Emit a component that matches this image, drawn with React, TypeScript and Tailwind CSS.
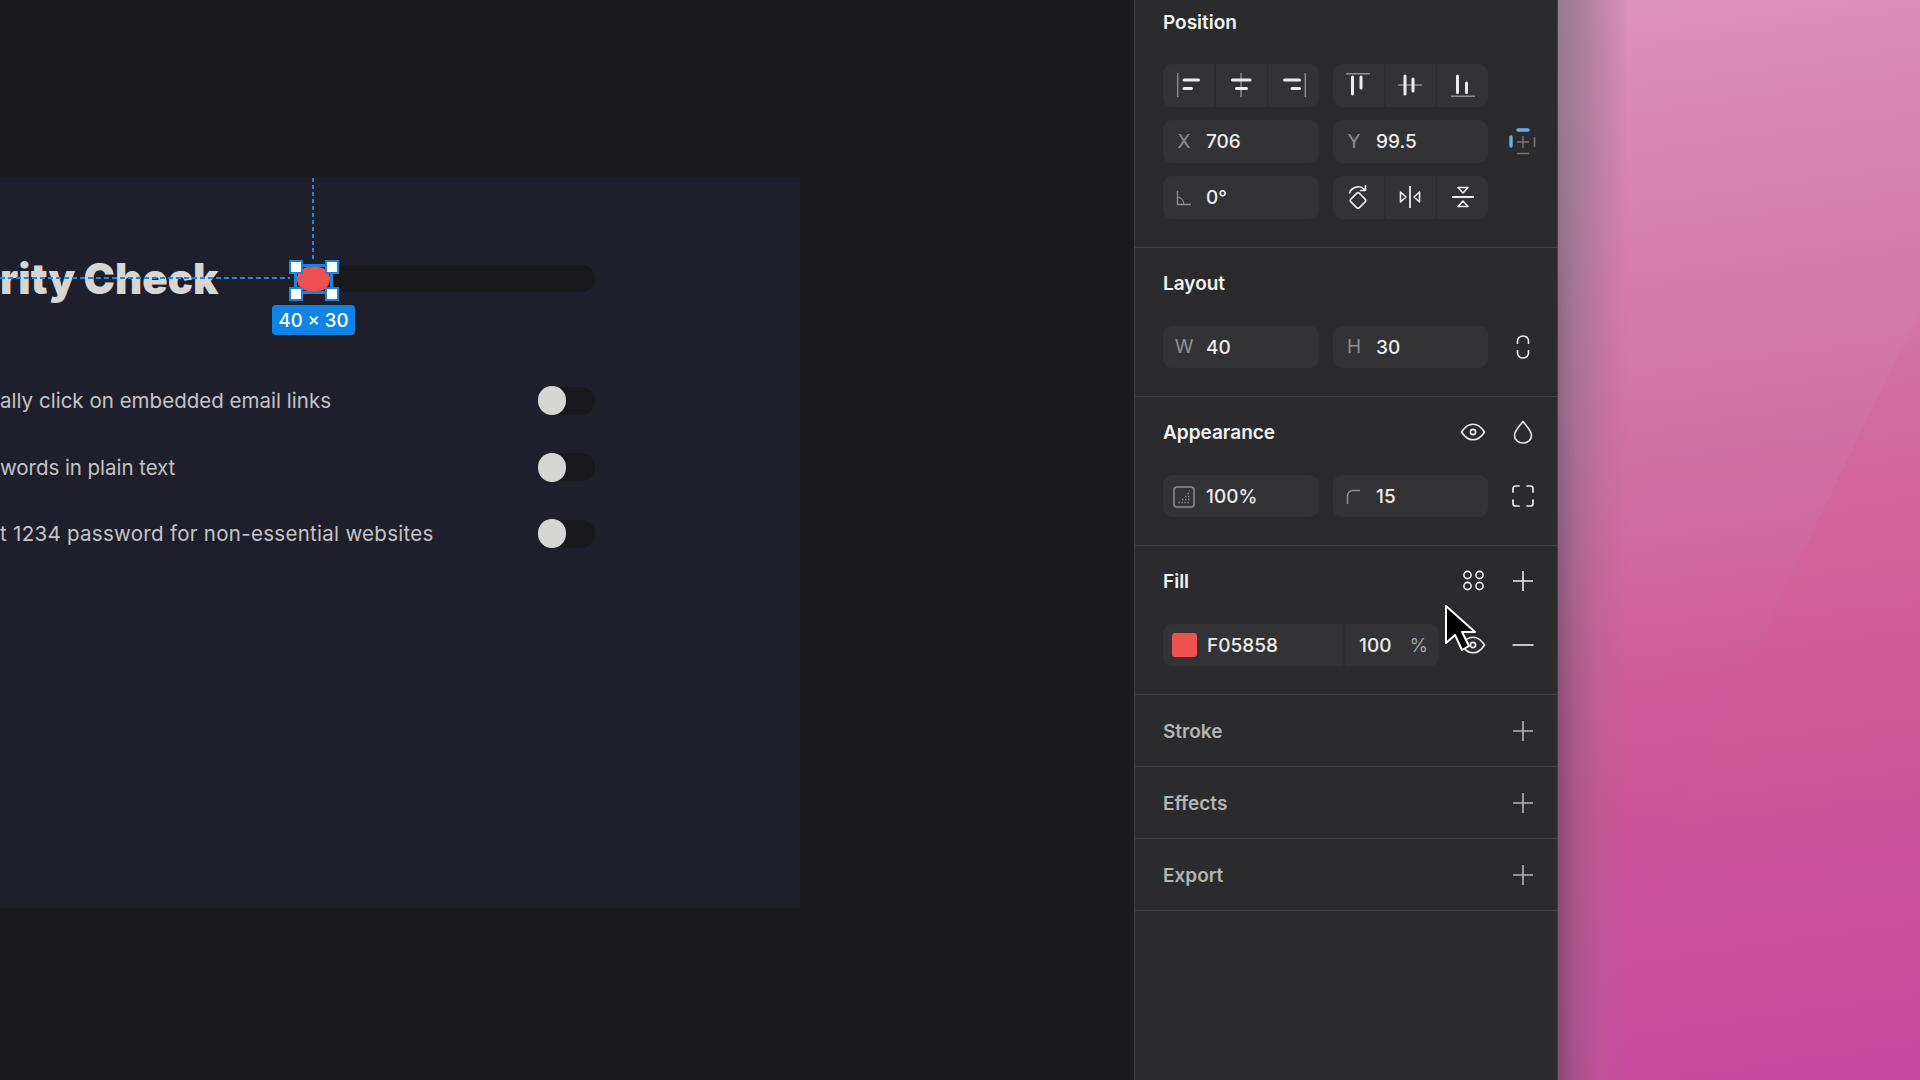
import React from "react";

const Svg = ({ s = 24, c = "", children }: { s?: number; c?: string; children: React.ReactNode }) => (
  <svg width={s} height={s} viewBox={`0 0 ${s} ${s}`} fill="none" className={`block shrink-0 ${c}`}>
    {children}
  </svg>
);

const G = "#8e8e90";
const W = "#ececec";
const bar = { stroke: W, strokeWidth: 3, strokeLinecap: "round" as const };
const thin = { stroke: G, strokeWidth: 1.4 };

const AlignLeft = () => (
  <Svg><path d="M0.7 0V24" {...thin} /><path d="M7 7H21.5M7 15.5H14.5" {...bar} /></Svg>
);
const AlignCenter = () => (
  <Svg><path d="M12 0V24" {...thin} /><path d="M3.5 7H21M7.5 15.5H17.5" {...bar} /></Svg>
);
const AlignRight = () => (
  <Svg><path d="M23.3 0V24" {...thin} /><path d="M2.5 7H17.5M10 15.5H17.5" {...bar} /></Svg>
);
const AlignTop = () => (
  <Svg><path d="M0 0.7H24" {...thin} /><path d="M6.5 4V21M15 4V15" {...bar} /></Svg>
);
const AlignMiddle = () => (
  <Svg><path d="M0 12H24" {...thin} /><path d="M7 3V21M15 6V18" {...bar} /></Svg>
);
const AlignBottom = () => (
  <Svg><path d="M0 23.3H24" {...thin} /><path d="M6.5 3V19.5M15.5 10V19.5" {...bar} /></Svg>
);
const Rotate = () => (
  <Svg>
    <rect x="6" y="9.5" width="12" height="12" rx="2" transform="rotate(45 12 15.5)" stroke={W} strokeWidth="1.6" />
    <path d="M3.5 8C5.5 2 14 -0.5 18.5 4.5M19.5 0.5V5.5H14.5" stroke={W} strokeWidth="1.6" strokeLinecap="round" strokeLinejoin="round" />
  </Svg>
);
const FlipH = () => (
  <Svg>
    <path d="M12 1V23" stroke={W} strokeWidth="1.8" />
    <path d="M2.5 7V17L8 12Z M21.5 7V17L16 12Z" stroke={W} strokeWidth="1.6" strokeLinejoin="round" />
  </Svg>
);
const FlipV = () => (
  <Svg>
    <path d="M1 12H23" stroke={W} strokeWidth="1.8" />
    <path d="M7 2.5H17L12 8Z M7 21.5H17L12 16Z" stroke={W} strokeWidth="1.6" strokeLinejoin="round" />
  </Svg>
);
const Constraints = () => (
  <svg width="28" height="28" viewBox="0 0 28 28" fill="none" className="block">
    <path d="M9 2H19" stroke="#62b0ee" strokeWidth="3.4" strokeLinecap="round" />
    <path d="M2 9V18" stroke="#62b0ee" strokeWidth="3.4" strokeLinecap="round" />
    <path d="M8 14H20M14 8V20" stroke="#77777a" strokeWidth="1.4" />
    <path d="M8 25.5H20M25.5 9V19" stroke="#77777a" strokeWidth="1.6" />
  </svg>
);
const Link = () => (
  <Svg>
    <path d="M6.5 9V6a5.5 5 0 0 1 11 0V9" stroke={W} strokeWidth="1.6" strokeLinecap="butt" />
    <path d="M6.5 15V18a5.5 5 0 0 0 11 0V15" stroke={W} strokeWidth="1.6" strokeLinecap="butt" />
  </Svg>
);
const Eye = ({ o = W }: { o?: string }) => (
  <Svg s={26}>
    <path d="M1.5 13C5 7.5 9 5.2 13 5.2S21 7.5 24.5 13C21 18.5 17 20.8 13 20.8S5 18.5 1.5 13Z" stroke={o} strokeWidth="1.6" strokeLinejoin="round" />
    <circle cx="13" cy="13" r="2.6" stroke={o} strokeWidth="1.6" />
  </Svg>
);
const Drop = () => (
  <Svg>
    <path d="M12 1.5C8.5 6 3.5 10.5 3.5 15.5a8.5 7.5 0 0 0 17 0C20.5 10.5 15.5 6 12 1.5Z" stroke={W} strokeWidth="1.6" strokeLinejoin="round" />
  </Svg>
);
const Corners = () => (
  <Svg>
    <path d="M2 8V4.5A2.5 2.5 0 0 1 4.5 2H8M16 2H19.5A2.5 2.5 0 0 1 22 4.5V8M22 16V19.5A2.5 2.5 0 0 1 19.5 22H16M8 22H4.5A2.5 2.5 0 0 1 2 19.5V16" stroke={W} strokeWidth="1.7" strokeLinecap="round" />
  </Svg>
);
const Styles = () => (
  <Svg>
    <circle cx="6.5" cy="6" r="3.6" stroke={W} strokeWidth="1.6" />
    <circle cx="18.5" cy="6" r="3.6" stroke={W} strokeWidth="1.6" />
    <circle cx="6.5" cy="17" r="3.6" stroke={W} strokeWidth="1.6" />
    <circle cx="18.5" cy="17" r="3.6" stroke={W} strokeWidth="1.6" />
  </Svg>
);
const Plus = ({ o = W }: { o?: string }) => (
  <Svg><path d="M2 12H22M12 2V22" stroke={o} strokeWidth="1.6" /></Svg>
);
const Minus = () => (
  <Svg><path d="M1.5 12H22.5" stroke={W} strokeWidth="1.6" /></Svg>
);
const Angle = () => (
  <Svg s={16}>
    <path d="M1.5 1V14.5H15" stroke={G} strokeWidth="1.4" />
    <path d="M1.5 7C5 7.5 7.5 10.5 8 14.5" stroke={G} strokeWidth="1.2" />
  </Svg>
);
const Opacity = () => (
  <Svg s={22}>
    <rect x="1" y="1" width="20" height="20" rx="3" stroke={G} strokeWidth="1.5" />
    <path d="M5.5 16.5H17M9 13.5H17M12 10.5H17M14.5 7.5H17M16.5 5H17" stroke={G} strokeWidth="1.4" strokeDasharray="1.3 1.7" />
  </Svg>
);
const Radius = () => (
  <Svg s={16}>
    <path d="M1.5 15V7a5.5 5.5 0 0 1 5.5 -5.5H14" stroke={G} strokeWidth="1.5" />
  </Svg>
);

const Box = ({ children, c = "" }: { children: React.ReactNode; c?: string }) => (
  <div className={`flex items-center rounded-[9px] bg-[#333335] ${c}`}>{children}</div>
);

const Field = ({ label, value, w, h = "h-[42px]" }: { label: React.ReactNode; value: string; w: string; h?: string }) => (
  <Box c={`${w} ${h} pl-[7px]`}>
    <span className="flex w-[28px] items-center justify-center pt-[1px] text-[19px] text-[#8e8e90]">{label}</span>
    <span className="ml-[8px] pt-[2px] text-[19px] font-medium text-[#ececec]">{value}</span>
  </Box>
);

const Group = ({ w, icons }: { w: string; icons: React.ReactNode[] }) => (
  <div className={`grid ${w} h-[43px] grid-cols-3 gap-[1.5px] overflow-hidden rounded-[9px]`}>
    {icons.map((ic, i) => (
      <div key={i} className="flex items-center justify-center bg-[#333335] pb-[1px]">{ic}</div>
    ))}
  </div>
);

const Slot = ({ children }: { children?: React.ReactNode }) => (
  <div className="flex w-[50px] shrink-0 items-center justify-center">{children}</div>
);

const Row = ({ children, h = "h-[42px]" }: { children: React.ReactNode; h?: string }) => (
  <div className={`flex ${h} items-center pl-[28px] pr-[9px]`}>{children}</div>
);

const Title = ({ children, dim, right }: { children: string; dim?: boolean; right?: React.ReactNode }) => (
  <div className="flex h-[28px] items-center pl-[28px] pr-[9px]">
    <span className={`flex-1 pt-[2px] text-[19px] font-semibold ${dim ? "pt-[3px] text-[#b4b4b4]" : "text-[#f2f2f2]"}`}>{children}</span>
    {right}
  </div>
);

const Section = ({ children, top = "pt-[21px]", gap = "gap-[29px]" }: { children: React.ReactNode; top?: string; gap?: string }) => (
  <section className={`flex flex-col ${gap} border-b border-[#414143] ${top} pb-[28px]`}>{children}</section>
);

const Collapsed = ({ name }: { name: string }) => (
  <section className="flex h-[72px] items-center border-b border-[#414143]">
    <div className="flex-1">
      <Title dim right={<Slot><Plus o="#b4b4b4" /></Slot>}>{name}</Title>
    </div>
  </section>
);

const Toggle = () => (
  <div className="relative flex h-[29px] w-[57px] shrink-0 items-center">
    <div className="ml-[3px] h-[28px] w-[54px] rounded-full bg-[#18181d]" />
    <div className="absolute left-0 top-0 h-[29px] w-[28px] rounded-full bg-[#d6d6d4]" />
  </div>
);

const Setting = ({ text, c = "" }: { text: string; c?: string }) => (
  <div className="flex h-[29px] items-center justify-between">
    <span className={`whitespace-nowrap pt-[2px] text-[20.5px] text-[#c4c4c6] ${c}`}>{text}</span>
    <Toggle />
  </div>
);

const Handle = ({ c }: { c: string }) => (
  <div className={`absolute h-[14px] w-[14px] border-2 border-[#1b84dd] bg-white ${c}`} />
);

export default function App() {
  return (
    <div className="flex h-[1080px] w-[1920px] overflow-hidden bg-[#1b1b1d] font-['Inter',sans-serif]">
      <main className="w-[1134px] shrink-0 pt-[178px]">
        <div className="relative h-[730px] w-[800px] overflow-hidden bg-[#1f1f2c]">
          <div className="flex w-[595px] flex-col pt-[86px]">
            <div className="flex h-[29px] items-center justify-between">
              <span className="whitespace-nowrap text-[42px] font-black text-[#d6d6d4]">rity Check</span>
              <div className="relative h-[27px] w-[300px] shrink-0 rounded-full bg-[#18181d]">
                <div className="absolute -left-[1px] -top-[1px] h-[30px] w-[39px] border-[3px] border-[#1b84dd]">
                  <div className="absolute left-0 top-0 h-[24px] w-[33px] rounded-[12px] bg-[#ef5050]" />
                </div>
                <Handle c="-left-[6px] -top-[5px]" />
                <Handle c="left-[30px] -top-[5px]" />
                <Handle c="-left-[6px] top-[22px]" />
                <Handle c="left-[30px] top-[22px]" />
                <div className="absolute -left-[23px] top-[40px] flex h-[30px] w-[83px] items-center justify-center rounded-[4px] bg-[#0f84e6] pt-[1px] text-[18.5px] font-medium text-white">40 × 30</div>
              </div>
            </div>
            <div className="mt-[93px] flex flex-col gap-[37.5px]">
              <Setting text="ally click on embedded email links" c="tracking-[0.02px]" />
              <Setting text="words in plain text" c="-tracking-[0.05px]" />
              <Setting text="t 1234 password for non-essential websites" c="tracking-[0.29px]" />
            </div>
          </div>
          <div className="absolute left-0 top-[99px] h-[2px] w-[290px] bg-[repeating-linear-gradient(90deg,#1f86df_0,#1f86df_5px,transparent_5px,transparent_8px)]" />
          <div className="absolute left-[312px] top-0 h-[84px] w-[2px] bg-[repeating-linear-gradient(180deg,#1f86df_0,#1f86df_4px,transparent_4px,transparent_7px)]" />
        </div>
      </main>

      <aside className="relative h-full w-[424px] shrink-0 border-x border-[#414143] bg-[#2b2b2d]">
        <Section top="pt-[8px]" gap="gap-[28px]">
          <Title>Position</Title>
          <div className="flex flex-col gap-[13px]">
            <Row h="h-[43px]">
              <Group w="w-[156px]" icons={[<AlignLeft key="a" />, <AlignCenter key="b" />, <AlignRight key="c" />]} />
              <div className="ml-[14px]"><Group w="w-[155px]" icons={[<AlignTop key="a" />, <AlignMiddle key="b" />, <AlignBottom key="c" />]} /></div>
            </Row>
            <Row h="h-[43px]">
              <Field label="X" value="706" w="w-[156px]" h="h-[43px]" />
              <div className="ml-[14px]"><Field label="Y" value="99.5" w="w-[155px]" h="h-[43px]" /></div>
              <div className="ml-auto"><Slot><Constraints /></Slot></div>
            </Row>
            <Row h="h-[43px]">
              <Field label={<Angle />} value="0°" w="w-[156px]" h="h-[43px]" />
              <div className="ml-[14px]"><Group w="w-[155px]" icons={[<Rotate key="a" />, <FlipH key="b" />, <FlipV key="c" />]} /></div>
            </Row>
          </div>
        </Section>

        <Section>
          <Title>Layout</Title>
          <Row>
            <Field label="W" value="40" w="w-[156px]" />
            <div className="ml-[14px]"><Field label="H" value="30" w="w-[155px]" /></div>
            <div className="ml-auto"><Slot><Link /></Slot></div>
          </Row>
        </Section>

        <Section>
          <Title right={<><Slot><Eye /></Slot><Slot><Drop /></Slot></>}>Appearance</Title>
          <Row>
            <Field label={<Opacity />} value="100%" w="w-[156px]" />
            <div className="ml-[14px]"><Field label={<Radius />} value="15" w="w-[155px]" /></div>
            <div className="ml-auto"><Slot><Corners /></Slot></div>
          </Row>
        </Section>

        <Section>
          <Title right={<><Slot><Styles /></Slot><Slot><Plus /></Slot></>}>Fill</Title>
          <Row>
            <Box c="h-[42px] w-[276px]">
              <div className="ml-[9px] h-[24px] w-[25px] rounded-[3px] bg-[#ef5050]" />
              <span className="ml-[10px] w-[136px] pt-[2px] text-[19px] font-medium text-[#ececec]">F05858</span>
              <div className="h-full w-[2px] bg-[#2b2b2d]" />
              <span className="ml-[14px] pt-[2px] text-[19px] font-medium text-[#ececec]">100</span>
              <span className="ml-[18px] pt-[2px] text-[19px] text-[#a4a4a6]">%</span>
            </Box>
            <div className="ml-auto flex">
              <Slot><Eye /></Slot>
              <Slot><Minus /></Slot>
            </div>
          </Row>
        </Section>

        <Collapsed name="Stroke" />
        <Collapsed name="Effects" />
        <Collapsed name="Export" />

        <svg width="40" height="56" viewBox="0 0 40 56" className="absolute left-[309px] top-[603px]">
          <path d="M2 3V40L11 32L18 47L25 43L18 29H31Z" fill="#000" stroke="#fff" strokeWidth="2" strokeLinejoin="round" />
        </svg>
      </aside>

      <div className="relative flex-1 overflow-hidden bg-[linear-gradient(172deg,#dc92bb_0%,#d67fae_22%,#d06da4_45%,#cd5598_70%,#c7479f_100%)]">
        <div className="absolute inset-0 bg-[linear-gradient(180deg,#d2588f00_25%,#d25a9255_45%,#cf569400_85%)] [clip-path:polygon(362px_310px,362px_1080px,0px_1080px,0px_1058px)]" />
        <div className="absolute inset-y-0 left-0 w-[70px] bg-[linear-gradient(90deg,#7b4a6ecc_0%,#8d5a7e88_25%,#a8648a44_60%,transparent_100%)]" />
        <div className="absolute left-0 top-0 h-[800px] w-[80px] bg-[radial-gradient(ellipse_70px_700px_at_0_0,#9a8a94bb,transparent)]" />
      </div>
    </div>
  );
}
